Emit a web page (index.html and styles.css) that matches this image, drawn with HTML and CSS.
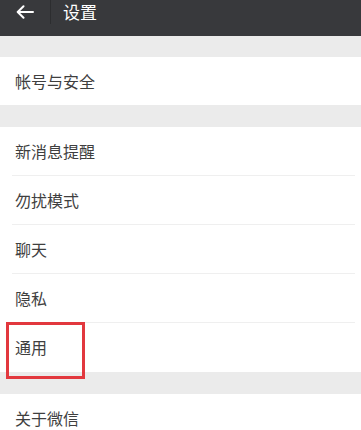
FILE: index.html
```html
<!DOCTYPE html>
<html lang="zh">
<head>
<meta charset="utf-8">
<link rel="stylesheet" href="styles.css">
</head>
<body>
<div class="app">
  <header class="topbar">
    <div class="back">
      <svg width="18" height="14" viewBox="0 0 18 14" aria-hidden="true">
        <path d="M17 7H2M7.5 1.2L1.7 7l5.8 5.8" fill="none" stroke="#fff" stroke-width="2" stroke-linecap="round" stroke-linejoin="round"/>
      </svg>
    </div>
    <div class="sep"></div>
    <div class="title">设置</div>
  </header>
  <div class="gap gap-top"></div>
  <div class="group">
    <div class="row">帐号与安全</div>
  </div>
  <div class="gap"></div>
  <div class="group">
    <div class="row line">新消息提醒</div>
    <div class="row line">勿扰模式</div>
    <div class="row line">聊天</div>
    <div class="row line">隐私</div>
    <div class="row line mark-wrap">通用<span class="mark"></span></div>
  </div>
  <div class="gap"></div>
  <div class="group">
    <div class="row">关于微信</div>
  </div>
</div>
</body>
</html>
```
FILE: styles.css
```css
html, body {
  margin: 0;
  padding: 0;
  background: #ffffff;
}
body {
  font-family: "Noto Sans CJK SC", "Noto Sans", sans-serif;
}
.app {
  width: 361px;
  height: 430px;
  overflow: hidden;
  background: #ffffff;
}
.topbar {
  height: 36px;
  background: #38393c;
  display: flex;
  align-items: flex-start;
}
.back {
  width: 50px;
  height: 24px;
  display: flex;
  align-items: center;
  padding-left: 16px;
  box-sizing: border-box;
}
.sep {
  width: 1px;
  height: 24px;
  background: #2c2d2f;
}
.title {
  height: 24px;
  line-height: 24px;
  margin-left: 12px;
  color: #ffffff;
  font-size: 17px;
}
.gap {
  height: 22px;
  background: #ebebeb;
}
.gap-top {
  height: 21px;
}
.group {
  background: #ffffff;
}
.row {
  height: 48px;
  line-height: 48px;
  padding-left: 15px;
  font-size: 16px;
  color: #3f3f3f;
  position: relative;
}
.row.line {
  height: 49px;
  line-height: 48px;
  box-sizing: border-box;
}
.row.line::after {
  content: "";
  position: absolute;
  left: 12px;
  right: 6px;
  bottom: 0;
  height: 1px;
  background: #efefef;
}
.row.line:last-child::after {
  display: none;
}
.mark {
  position: absolute;
  left: 6px;
  top: -1px;
  width: 79px;
  height: 57px;
  border: 3px solid #e2383e;
  box-sizing: border-box;
  z-index: 2;
}
```
